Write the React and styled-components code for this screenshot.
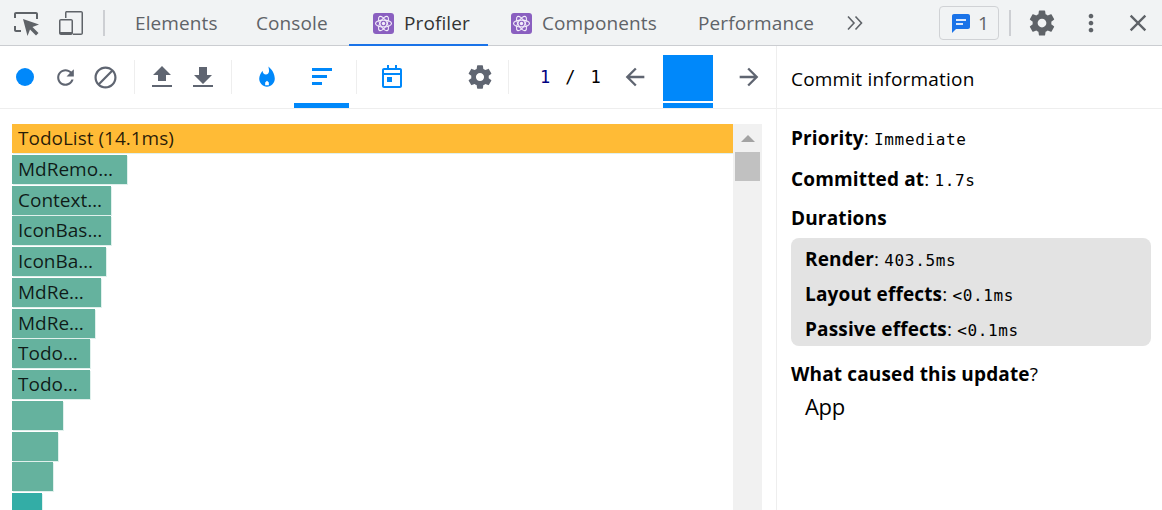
import React from 'react';
import styled, { createGlobalStyle } from 'styled-components';

const GlobalStyle = createGlobalStyle`
    html, body {
        margin: 0;
        height: 100%;
        overflow: hidden;
        background: #fff;
    }
    body {
        font-family: "Open Sans", "Noto Sans", sans-serif;
        color: #000;
    }
`

const Page = styled.div`
    display: flex;
    flex-direction: column;
    width: 1162px;
    height: 510px;
`

const TabBar = styled.div`
    display: flex;
    align-items: center;
    height: 45px;
    flex-shrink: 0;
    background: #f1f3f4;
    border-bottom: 1px solid #cbcdd1;
    color: #5f6368;
    font-size: 19px;
    letter-spacing: 0.1px;
`

const ChromeIcon = styled.span`
    display: flex;
    justify-content: center;
    align-items: center;
    width: ${props => props.$w}px;
    height: 45px;
    flex-shrink: 0;
    color: #5f6368;
`

const Divider = styled.span`
    width: 2px;
    height: 26px;
    flex-shrink: 0;
    background: #cdcfd3;
    margin: ${props => props.$margin};
`

const Tab = styled.div`
    display: flex;
    align-items: center;
    gap: 10px;
    height: 46px;
    margin-bottom: -1px;
    flex-shrink: 0;
    box-sizing: border-box;
    width: ${props => props.$w}px;
    padding-left: ${props => props.$pad}px;
    color: ${props => props.$active ? '#333' : '#5f6368'};
    box-shadow: ${props => props.$active ? 'inset 0 -2px 0 #1a73e8' : 'none'};
`

const IssuesButton = styled.div`
    display: flex;
    align-items: center;
    box-sizing: border-box;
    width: 60px;
    height: 34px;
    margin-left: 75px;
    padding-left: 11px;
    gap: 7px;
    flex-shrink: 0;
    border: 1px solid #d0d2d5;
    border-radius: 4px;
`

const Body = styled.div`
    display: flex;
    flex: 1;
    min-height: 0;
`

const LeftPane = styled.div`
    display: flex;
    flex-direction: column;
    width: 776px;
    flex-shrink: 0;
    border-right: 1px solid #eeeeee;
`

const Toolbar = styled.div`
    display: flex;
    align-items: center;
    height: 62px;
    flex-shrink: 0;
    padding-left: 5px;
    border-bottom: 1px solid #eeeeee;
`

const ToolButton = styled.span`
    display: flex;
    justify-content: center;
    align-items: center;
    width: ${props => props.$w || 40}px;
    height: 62px;
    flex-shrink: 0;
    box-sizing: border-box;
    color: ${props => props.$blue ? '#0088fa' : '#5f6571'};
    position: relative;
    &::after {
        content: '';
        display: ${props => props.$selected ? 'block' : 'none'};
        position: absolute;
        left: 0;
        right: 0;
        bottom: 0;
        height: 5px;
        background: #0088fa;
    }
`

const ToolSep = styled.span`
    width: 1px;
    height: 34px;
    flex-shrink: 0;
    background: #eeeeee;
    margin: 0 7px 0 ${props => props.$left || 8}px;
`

const ToolSpacer = styled.span`
    width: 41px;
    flex-shrink: 0;
`

const RecordDot = styled.span`
    width: 18px;
    height: 18px;
    border-radius: 50%;
    background: #0088fa;
`

const Counter = styled.div`
    display: flex;
    gap: 15px;
    width: 105px;
    padding-left: 24px;
    box-sizing: border-box;
    flex-shrink: 0;
    font-family: "DejaVu Sans Mono", "Liberation Mono", monospace;
    font-size: 17px;
`

const CounterNum = styled.span`
    color: ${props => props.$current ? '#000080' : '#000'};
`

const CommitColumn = styled.div`
    display: flex;
    flex-direction: column;
    width: 50px;
    height: 62px;
    margin: 0 22px 0 14px;
    padding-top: 9px;
    box-sizing: border-box;
    flex-shrink: 0;
`

const CommitBar = styled.div`
    height: 46px;
    background: #0088fa;
`

const CommitUnderline = styled.div`
    height: 5px;
    margin-top: 2px;
    background: #0088fa;
`

const ChartArea = styled.div`
    display: flex;
    flex: 1;
    min-height: 0;
    overflow: hidden;
    padding: 15px 14px 0 12px;
`

const BarList = styled.div`
    display: flex;
    flex-direction: column;
    gap: 1.75px;
    flex: 1;
    min-width: 0;
`

const RankBar = styled.div`
    flex-shrink: 0;
    box-sizing: border-box;
    height: 29px;
    width: ${props => props.$w}px;
    padding-left: 6px;
    line-height: 29px;
    font-size: 19px;
    white-space: nowrap;
    overflow: hidden;
    background: ${props => props.$color};
    color: rgba(0, 0, 0, 0.85);
    box-shadow: 1px 1px 0 rgba(101, 178, 158, 0.2);
`

const Scrollbar = styled.div`
    display: flex;
    flex-direction: column;
    align-items: center;
    width: 29px;
    flex-shrink: 0;
    background: #f1f1f1;
`

const ScrollArrow = styled.div`
    width: 0;
    height: 0;
    margin-top: 11px;
    border-left: 7px solid transparent;
    border-right: 7px solid transparent;
    border-bottom: 7px solid #a3a3a3;
`

const ScrollThumb = styled.div`
    width: 25px;
    height: 29px;
    margin-top: 10px;
    background: #c1c1c1;
`

const RightPane = styled.div`
    display: flex;
    flex-direction: column;
    flex: 1;
    min-width: 0;
`

const PaneHeader = styled.div`
    display: flex;
    align-items: center;
    height: 59px;
    flex-shrink: 0;
    padding: 3px 0 0 14px;
    font-size: 19px;
    letter-spacing: 0.2px;
    border-bottom: 1px solid #eeeeee;
`

const Details = styled.div`
    display: flex;
    flex-direction: column;
    padding: 14px 11px 0 14px;
`

const Row = styled.div`
    display: flex;
    align-items: baseline;
    height: ${props => props.$h || 41}px;
    font-size: 19px;
    letter-spacing: 0.15px;
    line-height: 30px;
    white-space: pre;
`

const Label = styled.span`
    font-weight: 700;
`

const Mono = styled.span`
    font-family: "DejaVu Sans Mono", "Liberation Mono", monospace;
    font-size: 16px;
    letter-spacing: 0.65px;
`

const DurationBox = styled.div`
    display: flex;
    flex-direction: column;
    height: 108px;
    box-sizing: border-box;
    padding: 6px 14px 0;
    margin-bottom: 13px;
    background: #e3e3e3;
    border-radius: 8px;
`

const Culprit = styled.div`
    padding-left: 14px;
    font-size: 22px;
    letter-spacing: -0.3px;
    line-height: 30px;
`

const Svg = ({ size = 24, box = '0 0 24 24', d, children }) => (
    <svg width={size} height={size} viewBox={box} fill="currentColor">
        {d ? <path d={d} /> : children}
    </svg>
);

const paths = {
    reload: 'M17.65 6.35C16.2 4.9 14.21 4 12 4c-4.42 0-7.99 3.58-7.99 8s3.57 8 7.99 8c3.73 0 6.84-2.55 7.73-6h-2.08c-.82 2.33-3.04 4-5.65 4-3.31 0-6-2.69-6-6s2.69-6 6-6c1.66 0 3.14.69 4.22 1.78L13 11h7V4l-2.35 2.35z',
    clear: 'M12 0.5C5.65 0.5 0.5 5.65 0.5 12S5.65 23.5 12 23.5 23.5 18.35 23.5 12 18.35 0.5 12 0.5zM2.8 12c0-5.08 4.12-9.2 9.2-9.2 2.13 0 4.08.72 5.64 1.94L4.74 17.64C3.52 16.08 2.8 14.13 2.8 12zm9.2 9.2c-2.13 0-4.08-.72-5.64-1.94L19.26 6.36C20.48 7.92 21.2 9.87 21.2 12c0 5.08-4.12 9.2-9.2 9.2z',
    upload: 'M8 16h8v-6h5L12 1 3 10h5zM2 20h20v2H2z',
    download: 'M21 10h-5V2H8v8H3l9 9 9-9zM2 20v2h20v-2H2z',
    flame: 'M13.5.67s.74 2.65.74 4.8c0 2.06-1.35 3.73-3.41 3.73-2.07 0-3.63-1.67-3.63-3.73l.03-.36C5.21 7.51 3.5 10.62 3.5 14c0 4.7 3.8 8.5 8.5 8.5s8.5-3.8 8.5-8.5C20.5 8.61 17.41 3.8 13.5.67zM14 21h-4v-3l2-2 2 2z',
    ranked: 'M2 3h20v3H2zM2 10h15v3H2zM2 17h10v3H2z',
    calendar: 'M7 0h2v3h6V0h2v3h3c1.1 0 2 .9 2 2v16c0 1.1-.9 2-2 2H4c-1.1 0-2-.9-2-2V5c0-1.1.9-2 2-2h3zM4 5v3h16V5zm0 5v11h16V10zm3 2h5v5H7z',
    gear: 'M19.43 12.98c.04-.32.07-.64.07-.98s-.03-.66-.07-.98l2.11-1.65c.19-.15.24-.42.12-.64l-2-3.46c-.12-.22-.39-.3-.61-.22l-2.49 1c-.52-.4-1.08-.73-1.69-.98l-.38-2.65C14.46 2.18 14.25 2 14 2h-4c-.25 0-.46.18-.49.42l-.38 2.65c-.61.25-1.17.59-1.69.98l-2.49-1c-.23-.09-.49 0-.61.22l-2 3.46c-.13.22-.07.49.12.64l2.11 1.65c-.04.32-.07.65-.07.98s.03.66.07.98l-2.11 1.65c-.19.15-.24.42-.12.64l2 3.46c.12.22.39.3.61.22l2.49-1c.52.4 1.08.73 1.69.98l.38 2.65c.03.24.24.42.49.42h4c.25 0 .46-.18.49-.42l.38-2.65c.61-.25 1.17-.59 1.69-.98l2.49 1c.23.09.49 0 .61-.22l2-3.46c.12-.22.07-.49-.12-.64l-2.11-1.65zM12 15.5c-1.93 0-3.5-1.57-3.5-3.5s1.57-3.5 3.5-3.5 3.5 1.57 3.5 3.5-1.57 3.5-3.5 3.5z',
    back: 'M20 11H7.83l5.59-5.59L12 4l-8 8 8 8 1.41-1.41L7.83 13H20v-2z',
    forward: 'M12 4l-1.41 1.41L16.17 11H4v2h12.17l-5.58 5.59L12 20l8-8z',
    inspect: 'M3 2h20v2H3v4H1V4c0-1.1.9-2 2-2zm0 20c-1.1 0-2-.9-2-2v-4h2v4h5v2zM23 2c1.1 0 2 .9 2 2v5h-2V4zM10 9l16 5.5-6.5 2.5 6 6-2.5 2.5-6-6-2.5 6.5z',
    device: 'M8 1h15c1.1 0 2 .9 2 2v20c0 1.1-.9 2-2 2H15v-1.5h8.5V2.5H8.5V8H7V3c0-1.1.9-2 1-2zM3 9h10c1.1 0 2 .9 2 2v12c0 1.1-.9 2-2 2H3c-1.1 0-2-.9-2-2V11c0-1.1.9-2 2-2zm-.5 1.5V22h11V10.5z',
    dots: 'M12 8c1.1 0 2-.9 2-2s-.9-2-2-2-2 .9-2 2 .9 2 2 2zm0 2c-1.1 0-2 .9-2 2s.9 2 2 2 2-.9 2-2-.9-2-2-2zm0 6c-1.1 0-2 .9-2 2s.9 2 2 2 2-.9 2-2-.9-2-2-2z',
    close: 'M19 6.41L17.59 5 12 10.59 6.41 5 5 6.41 10.59 12 5 17.59 6.41 19 12 13.41 17.59 19 19 17.59 13.41 12z',
};

const Chevrons = () => (
    <svg width="18" height="18" viewBox="0 0 18 18" fill="none" stroke="currentColor" strokeWidth="1.6">
        <path d="M2 2.5L8 9l-6 6.5M9.5 2.5l6 6.5-6 6.5" />
    </svg>
);

const ReactBadge = () => (
    <svg width="21" height="21" viewBox="0 0 21 21">
        <rect width="21" height="21" rx="3" fill="#8a5fc0" />
        <g fill="none" stroke="#f3eefa" strokeWidth="1.1">
            <ellipse cx="10.5" cy="10.5" rx="8" ry="3.4" />
            <ellipse cx="10.5" cy="10.5" rx="8" ry="3.4" transform="rotate(60 10.5 10.5)" />
            <ellipse cx="10.5" cy="10.5" rx="8" ry="3.4" transform="rotate(120 10.5 10.5)" />
        </g>
        <circle cx="10.5" cy="10.5" r="1.7" fill="#f3eefa" />
    </svg>
);

const IssueIcon = () => (
    <svg width="20" height="20" viewBox="0 0 20 20">
        <path d="M3 1h14c1.1 0 2 .9 2 2v11c0 1.1-.9 2-2 2H5l-4 4V3c0-1.1.9-2 2-2z" fill="#1a73e8" />
        <path d="M5 6h10v2H5zM5 10h7v2H5z" fill="#dbe8fb" />
    </svg>
);

const bars = [
    { w: 721, color: '#ffbb36', label: 'TodoList (14.1ms)' },
    { w: 115, color: '#65b29e', label: 'MdRemo…' },
    { w: 99, color: '#65b29e', label: 'Context…' },
    { w: 99, color: '#65b29e', label: 'IconBas…' },
    { w: 94, color: '#65b29e', label: 'IconBa…' },
    { w: 89, color: '#65b29e', label: 'MdRe…' },
    { w: 83, color: '#65b29e', label: 'MdRe…' },
    { w: 78, color: '#65b29e', label: 'Todo…' },
    { w: 78, color: '#65b29e', label: 'Todo…' },
    { w: 51, color: '#65b29e' },
    { w: 46, color: '#65b29e' },
    { w: 41, color: '#65b29e' },
    { w: 30, color: '#33ada6' },
];

const App = () => (
    <Page>
        <GlobalStyle />
        <TabBar>
            <ChromeIcon $w={52}><Svg size={26} box="0 0 26 26" d={paths.inspect} /></ChromeIcon>
            <ChromeIcon $w={38}><Svg size={26} box="0 0 26 26" d={paths.device} /></ChromeIcon>
            <Divider $margin="0 30px 0 13px" />
            <Tab $w={121}>Elements</Tab>
            <Tab $w={93}>Console</Tab>
            <Tab $w={139} $pad={24} $active><ReactBadge />Profiler</Tab>
            <Tab $w={187} $pad={23}><ReactBadge />Components</Tab>
            <Tab $w={171} $pad={23}>Performance</Tab>
            <ChromeIcon $w={18}><Chevrons /></ChromeIcon>
            <IssuesButton><IssueIcon />1</IssuesButton>
            <Divider $margin="0 15px 0 10px" />
            <ChromeIcon $w={32}><Svg size={30} d={paths.gear} /></ChromeIcon>
            <ChromeIcon $w={66}><Svg size={28} d={paths.dots} /></ChromeIcon>
            <ChromeIcon $w={28}><Svg size={30} d={paths.close} /></ChromeIcon>
        </TabBar>
        <Body>
            <LeftPane>
                <Toolbar>
                    <ToolButton $blue><RecordDot /></ToolButton>
                    <ToolButton><Svg size={25} d={paths.reload} /></ToolButton>
                    <ToolButton><Svg size={23} d={paths.clear} /></ToolButton>
                    <ToolSep $left={9} />
                    <ToolButton><Svg size={24} d={paths.upload} /></ToolButton>
                    <ToolButton $w={41}><Svg size={24} d={paths.download} /></ToolButton>
                    <ToolSep />
                    <ToolButton $w={55} $blue><Svg size={22} d={paths.flame} /></ToolButton>
                    <ToolButton $w={55} $blue $selected><Svg size={24} d={paths.ranked} /></ToolButton>
                    <ToolSep $left={7} />
                    <ToolButton $w={55} $blue><Svg size={24} d={paths.calendar} /></ToolButton>
                    <ToolSpacer />
                    <ToolButton><Svg size={28} d={paths.gear} /></ToolButton>
                    <ToolSep />
                    <Counter>
                        <CounterNum $current>1</CounterNum>
                        <CounterNum>/</CounterNum>
                        <CounterNum>1</CounterNum>
                    </Counter>
                    <ToolButton $w={28}><Svg size={28} d={paths.back} /></ToolButton>
                    <CommitColumn>
                        <CommitBar />
                        <CommitUnderline />
                    </CommitColumn>
                    <ToolButton $w={28}><Svg size={28} d={paths.forward} /></ToolButton>
                </Toolbar>
                <ChartArea>
                    <BarList>
                        {bars.map((bar, i) => (
                            <RankBar key={i} $w={bar.w} $color={bar.color}>{bar.label}</RankBar>
                        ))}
                    </BarList>
                    <Scrollbar>
                        <ScrollArrow />
                        <ScrollThumb />
                    </Scrollbar>
                </ChartArea>
            </LeftPane>
            <RightPane>
                <PaneHeader>Commit information</PaneHeader>
                <Details>
                    <Row><Label>Priority</Label>: <Mono>Immediate</Mono></Row>
                    <Row $h={39}><Label>Committed at</Label>: <Mono>1.7s</Mono></Row>
                    <Row $h={35}><Label>Durations</Label></Row>
                    <DurationBox>
                        <Row $h={35}><Label>Render</Label>: <Mono>403.5ms</Mono></Row>
                        <Row $h={35}><Label>Layout effects</Label>: <Mono>&lt;0.1ms</Mono></Row>
                        <Row $h={32}><Label>Passive effects</Label>: <Mono>&lt;0.1ms</Mono></Row>
                    </DurationBox>
                    <Row $h={32}><Label>What caused this update</Label>?</Row>
                    <Culprit>App</Culprit>
                </Details>
            </RightPane>
        </Body>
    </Page>
);

export default App;
